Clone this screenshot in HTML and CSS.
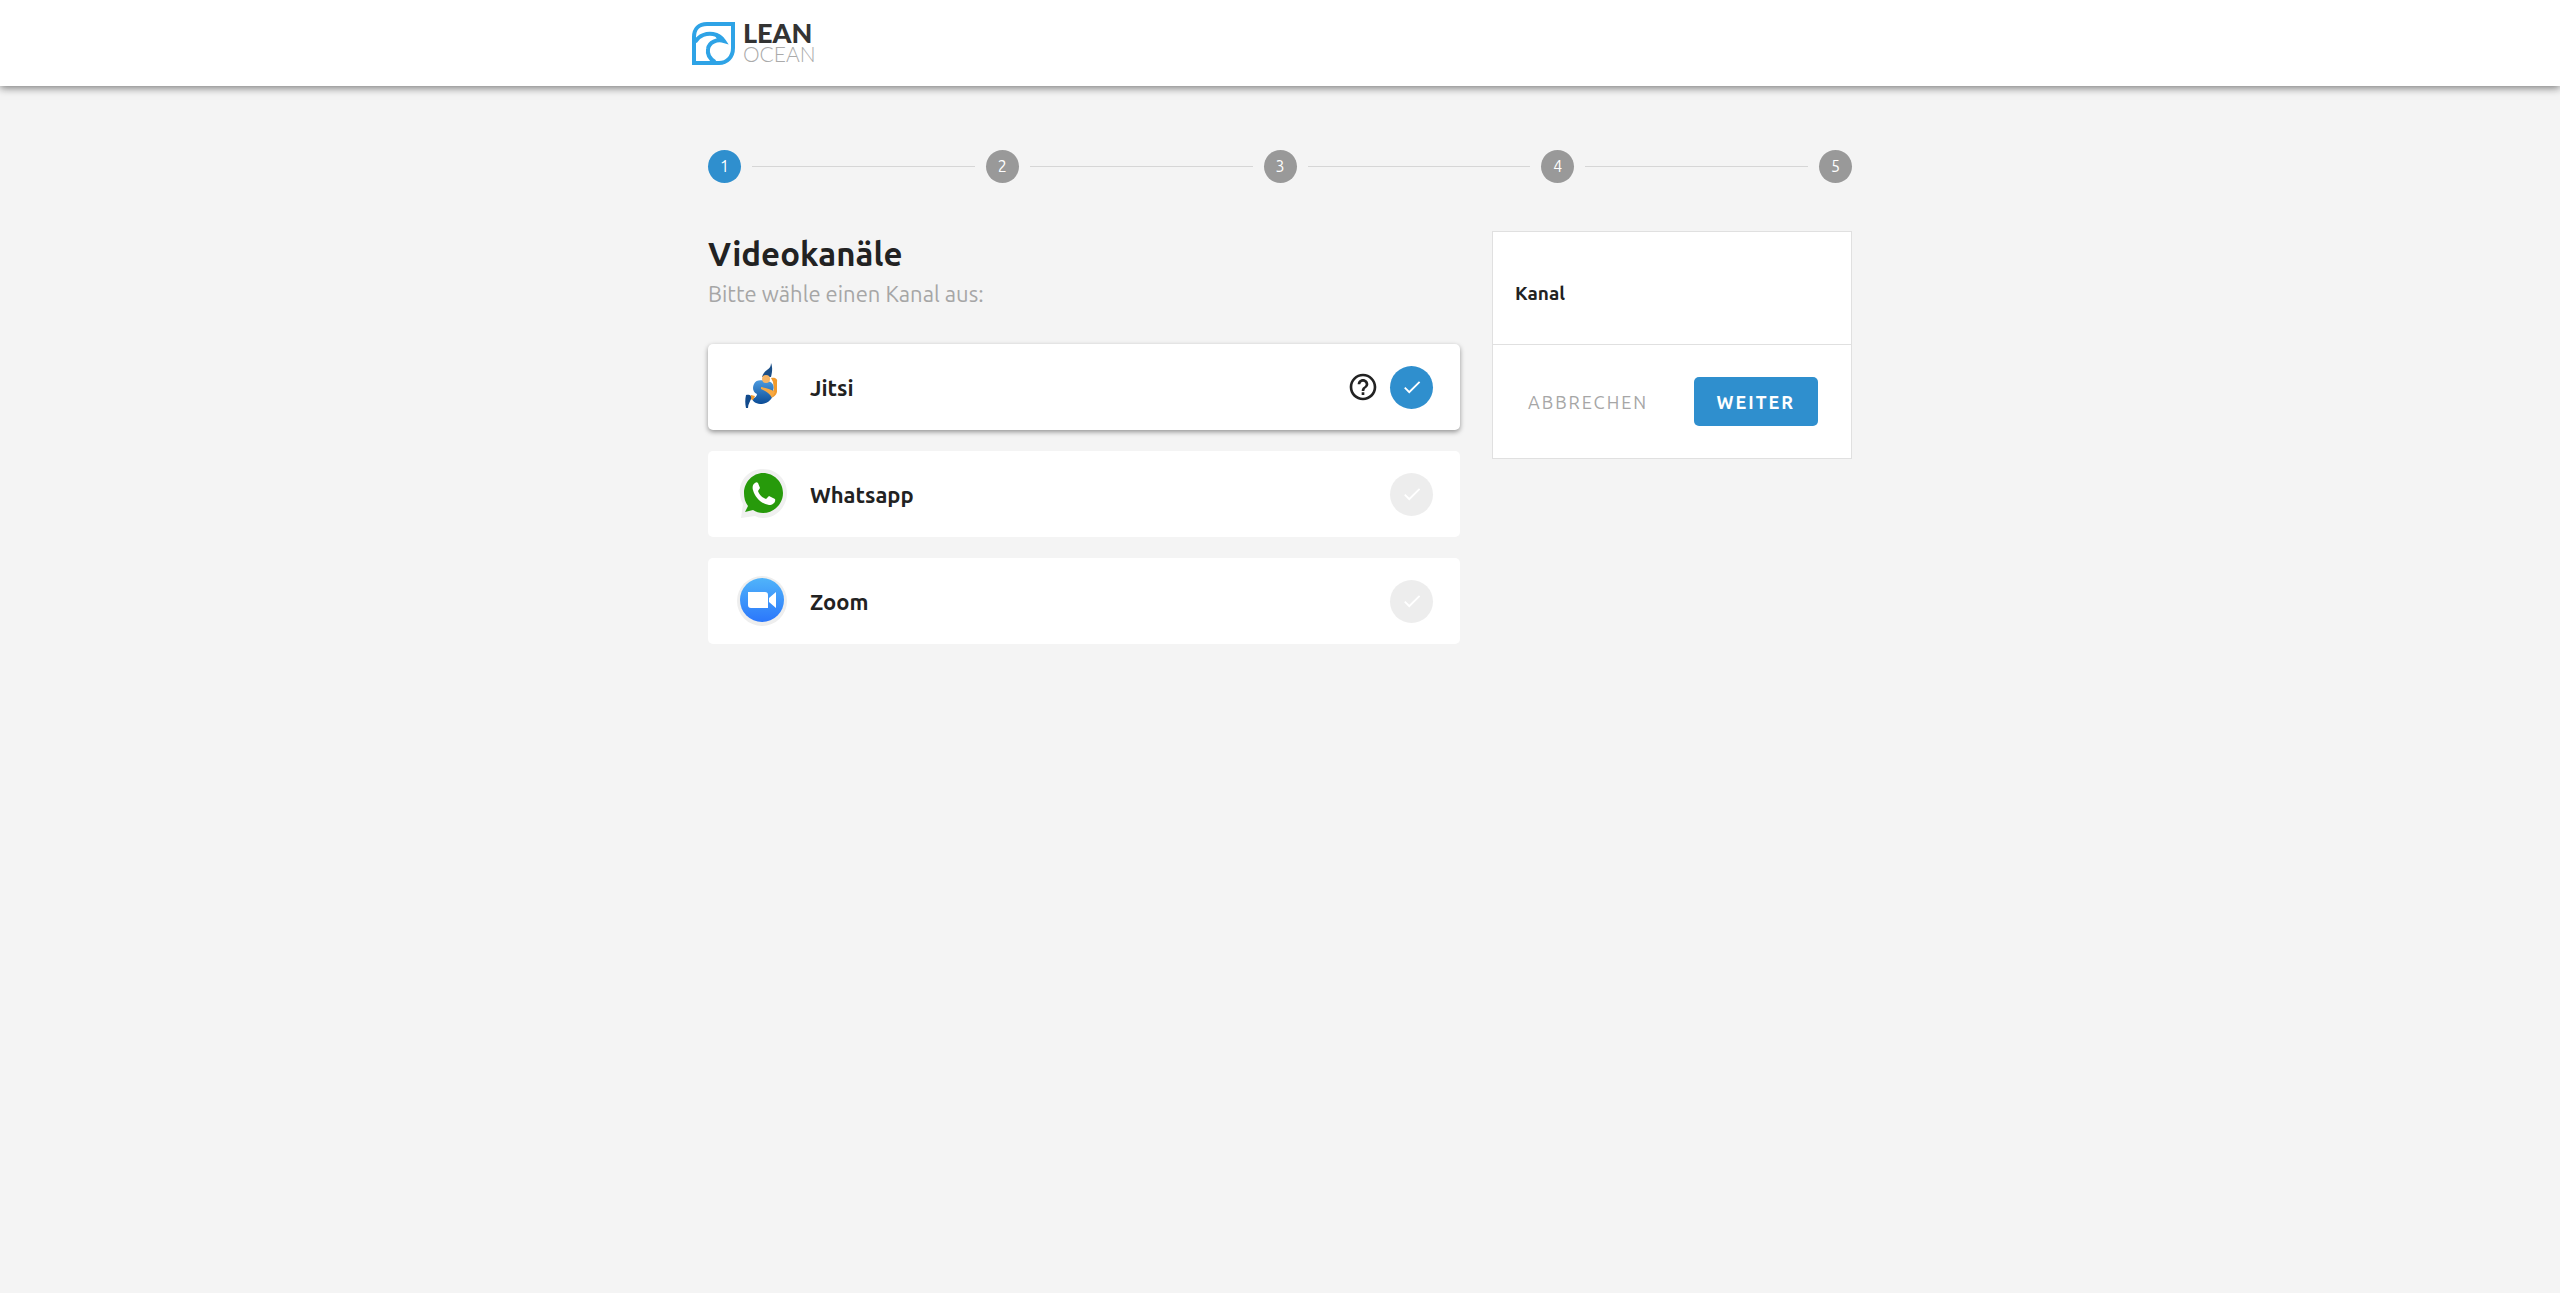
FILE: index.html
```html
<!DOCTYPE html>
<html lang="de">

<head>
    <meta charset="utf-8">
    <meta name="viewport" content="width=device-width, initial-scale=1">
    <title>Lean Ocean</title>
    <link rel="stylesheet" href="styles.css">
</head>

<body>
    <header class="header">
        <div class="header-inner">
            <a class="logo" href="#">
                <svg class="logo-mark" viewBox="0 0 43 43" fill="none" stroke="#2ea3e6" stroke-width="4">
                    <path d="M15 2H41V26C41 35 35 41 27 41H2V15C2 7 7 2 15 2Z" />
                    <path d="M3 20C7 13 15 11 21 12C26 13 30 16 32 19C25 17 17 20 16 27C15 33 18 37 23 40" />
                    <path d="M21 11C27 11 31 15 33 19L25 17Z" fill="#2ea3e6" stroke="none" />
                </svg>
                <span class="logo-text">
                    <span class="logo-lean">LEAN</span>
                    <span class="logo-ocean">OCEAN</span>
                </span>
            </a>
        </div>
    </header>

    <main class="container">
        <!-- Progress -->
        <ol class="stepper">
            <li class="step active">1</li>
            <li class="step-line" role="presentation"></li>
            <li class="step">2</li>
            <li class="step-line" role="presentation"></li>
            <li class="step">3</li>
            <li class="step-line" role="presentation"></li>
            <li class="step">4</li>
            <li class="step-line" role="presentation"></li>
            <li class="step">5</li>
        </ol>

        <form class="content">
            <section class="channels">
                <h1>Videokanäle</h1>
                <p class="subtitle">Bitte wähle einen Kanal aus:</p>

                <div class="channel-list">
                    <div class="channel selected">
                        <svg class="channel-icon" viewBox="0 0 54 54">
                            <defs>
                                <linearGradient id="jitsi" x1="0" y1="0" x2="0" y2="1">
                                    <stop offset="0" stop-color="#4c9be0" />
                                    <stop offset="1" stop-color="#0b4c96" />
                                </linearGradient>
                            </defs>
                            <path d="M36 3C38 8 37 13 36 17L27 17C28 14 29 12 32 10C35 8 36 6 36 3Z" fill="#1b4f88" />
                            <path d="M36 18C40 17 43 19 42 22L42 32C41 36 38 38 35 37L34 33L39 30L38 22Z" fill="#f19a2c" />
                            <path d="M19 24C21 19 27 20 31 21C37 21 40 25 38 31C39 38 34 43 27 44C22 44 18 42 17 39C20 38 22 36 22 34C18 32 17 28 19 24Z" fill="url(#jitsi)" />
                            <circle cx="31" cy="19" r="4" fill="#f7b565" />
                            <path d="M26 27C31 28 36 29 40 32L37 38C35 34 33 32 26 29Z" fill="#f7a943" />
                            <path d="M16 35L20 36L18 40L15 39Z" fill="#f19a2c" />
                            <path d="M11 35C14 34 17 35 16 39C15 42 13 44 13 48L11 48C10 44 10 39 11 35Z" fill="#124a8c" />
                        </svg>
                        <label class="channel-name" for="jitsi-radio">Jitsi</label>
                        <button class="help" type="button" aria-label="Hilfe">
                            <svg viewBox="0 0 24 24" fill="#222">
                                <path d="M11 18h2v-2h-2v2zm1-16C6.480 2 2 6.480 2 12s4.480 10 10 10 10-4.480 10-10S17.520 2 12 2zm0 18c-4.410 0-8-3.590-8-8s3.590-8 8-8 8 3.590 8 8-3.590 8-8 8zm0-14c-2.210 0-4 1.790-4 4h2c0-1.100.9-2 2-2s2 .9 2 2c0 2-3 1.750-3 5h2c0-2.250 3-2.500 3-5 0-2.210-1.790-4-4-4z" />
                            </svg>
                        </button>
                        <span class="check">
                            <input type="radio" id="jitsi-radio" name="channel" value="jitsi" checked>
                            <svg viewBox="0 0 24 24"><path d="M9 16.200 4.800 12l-1.400 1.400L9 19 21 7l-1.400-1.400z" /></svg>
                        </span>
                    </div>

                    <div class="channel">
                        <svg class="channel-icon" viewBox="0 0 54 54">
                            <path d="M28 2C42 2 52 13 52 26S42 51 28 51C25 51 22 50 20 49L6 51L8 37C-1 20 10 2 28 2Z" fill="#f0f0f0" />
                            <path d="M28 6C39 6 48 15 48 26S39 46 28 46C24 46 21 45 18 43L10 45L13 39C10 35 9 31 9 26C9 15 18 6 28 6Z" fill="#279a0b" />
                            <path d="M20 16C18 17 17 20 18 23C20 31 27 37 34 38C38 38 41 35 40 32L34 29L31 32C27 31 24 27 23 24L25 21L23 16C22 15 21 15 20 16Z" fill="#fff" />
                        </svg>
                        <label class="channel-name" for="whatsapp-radio">Whatsapp</label>
                        <span class="check">
                            <input type="radio" id="whatsapp-radio" name="channel" value="whatsapp">
                            <svg viewBox="0 0 24 24"><path d="M9 16.200 4.800 12l-1.400 1.400L9 19 21 7l-1.400-1.400z" /></svg>
                        </span>
                    </div>

                    <div class="channel">
                        <svg class="channel-icon" viewBox="0 0 54 54">
                            <defs>
                                <linearGradient id="zoom" x1="0" y1="0" x2="0" y2="1">
                                    <stop offset="0" stop-color="#50b4fa" />
                                    <stop offset="1" stop-color="#2b77fb" />
                                </linearGradient>
                            </defs>
                            <circle cx="27" cy="27" r="25" fill="#eee" />
                            <circle cx="27" cy="26" r="22" fill="url(#zoom)" />
                            <path d="M13 18H30Q33 18 33 21V34H16Q13 34 13 31ZM34 24L41 18V34L34 28Z" fill="#fff" />
                        </svg>
                        <label class="channel-name" for="zoom-radio">Zoom</label>
                        <span class="check">
                            <input type="radio" id="zoom-radio" name="channel" value="zoom">
                            <svg viewBox="0 0 24 24"><path d="M9 16.200 4.800 12l-1.400 1.400L9 19 21 7l-1.400-1.400z" /></svg>
                        </span>
                    </div>
                </div>
            </section>

            <aside class="summary">
                <h2>Kanal</h2>
                <div class="actions">
                    <button class="btn btn-cancel" type="button">ABBRECHEN</button>
                    <button class="btn btn-next" type="submit">WEITER</button>
                </div>
            </aside>
        </form>
    </main>
</body>

</html>
```
FILE: styles.css
```css
* {
    box-sizing: border-box;
}

body {
    margin: 0;
    background-color: #f4f4f4;
    color: #222;
    font-family: Ubuntu, "Noto Sans", sans-serif;
}

h1,
h2,
p {
    margin: 0;
}

.header {
    background-color: #fff;
    box-shadow: 0 2px 8px rgba(0, 0, 0, 0.5);
}

.header-inner,
.container {
    max-width: 1176px;
    margin: 0 auto;
}

.header-inner {
    display: flex;
    align-items: center;
    height: 86px;
}

/* Logo */
.logo {
    display: flex;
    align-items: center;
    gap: 8px;
    font-family: Lato, sans-serif;
    text-decoration: none;
}

.logo-mark {
    width: 43px;
    height: 43px;
}

.logo-text {
    display: flex;
    flex-direction: column;
}

.logo-lean {
    color: #333;
    font-size: 27px;
    font-weight: 900;
    line-height: 22px;
}

.logo-ocean {
    color: #aaa;
    font-size: 21px;
    font-weight: 300;
    line-height: 20px;
}

.container {
    padding: 64px 16px;
}

/* Stepper */
.stepper {
    display: flex;
    align-items: center;
    gap: 11px;
    margin: 0 0 48px;
    padding: 0;
    list-style: none;
}

.step {
    width: 33px;
    height: 33px;
    border-radius: 50%;
    background-color: #999;
    color: #fff;
    font-size: 16px;
    line-height: 33px;
    text-align: center;
}

.step.active {
    background-color: #2f8fce;
}

.step-line {
    flex: 1;
    height: 1px;
    background-color: #d6d6d6;
}

.content {
    display: flex;
    align-items: flex-start;
    gap: 32px;
}

.channels {
    flex: 1;
}

h1 {
    font-size: 33px;
    line-height: 46px;
}

.subtitle {
    color: #a6a6a6;
    font-size: 22px;
    line-height: 34px;
}

/* Channel cards */
.channel-list {
    display: flex;
    flex-direction: column;
    gap: 21px;
    margin-top: 33px;
}

.channel {
    display: flex;
    align-items: center;
    height: 86px;
    padding: 0 27px;
    border-radius: 5px;
    background-color: #fff;
}

.channel.selected {
    box-shadow: 0 2px 5px rgba(0, 0, 0, 0.4);
}

.channel-icon {
    width: 54px;
    height: 54px;
}

.channel-name {
    flex: 1;
    margin-left: 21px;
    font-size: 22px;
    font-weight: 700;
}

.help {
    width: 32px;
    height: 32px;
    margin-right: 11px;
    padding: 0;
    border: none;
    background: none;
    cursor: pointer;
}

.help svg {
    display: block;
}

.check {
    display: grid;
    place-items: center;
}

.check input,
.check svg {
    grid-area: 1 / 1;
}

.check input {
    appearance: none;
    width: 43px;
    height: 43px;
    margin: 0;
    border-radius: 50%;
    background-color: #ededed;
    cursor: pointer;
}

.check input:checked {
    background-color: #2f8fce;
}

.check svg {
    width: 22px;
    height: 22px;
    fill: #fff;
    pointer-events: none;
}

/* Summary */
.summary {
    width: 360px;
    border: 1px solid #e0e0e0;
    background-color: #fff;
}

h2 {
    padding: 48px 22px 38px;
    font-size: 19px;
    line-height: 26px;
}

.actions {
    display: flex;
    align-items: center;
    justify-content: space-between;
    padding: 32px 33px 32px 35px;
    border-top: 1px solid #e0e0e0;
}

.btn {
    height: 49px;
    padding: 0;
    border: none;
    border-radius: 5px;
    font-family: inherit;
    font-size: 18px;
    letter-spacing: 2px;
    cursor: pointer;
}

.btn-cancel {
    background: none;
    color: #a6a6a6;
}

.btn-next {
    padding: 0 23px;
    background-color: #2f8fce;
    color: #fff;
    font-weight: 700;
}
```
